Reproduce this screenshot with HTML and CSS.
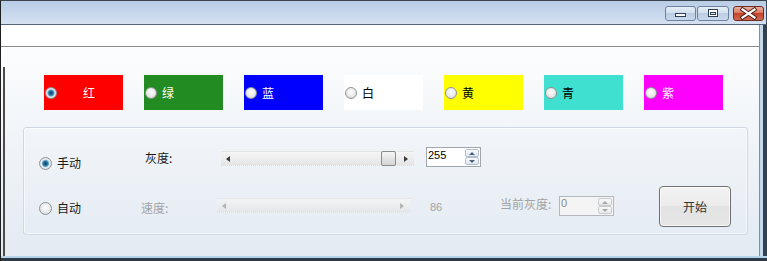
FILE: index.html
```html
<!DOCTYPE html>
<html>
<head>
<meta charset="utf-8">
<link rel="stylesheet" href="styles.css">
</head>
<body>
<div class="window">
  <div class="titlebar">
    <div class="tb-btn tb-min">
      <svg width="29" height="13" viewBox="0 0 29 13"><rect x="9.5" y="6.5" width="10" height="3" fill="#fff" stroke="#2f3f52"/></svg>
    </div>
    <div class="tb-btn tb-max">
      <svg width="30" height="13" viewBox="0 0 30 13"><rect x="10.5" y="2.5" width="9" height="7" fill="#fff" stroke="#2f3f52"/><rect x="12.5" y="5.5" width="5" height="2" fill="#dfe8f3" stroke="#2f3f52"/></svg>
    </div>
    <div class="tb-btn tb-close">
      <svg width="29" height="13" viewBox="0 0 29 13"><path d="M8.5 2.5 L20.5 10.5 M20.5 2.5 L8.5 10.5" stroke="#4a1a14" stroke-width="4" stroke-linecap="square"/><path d="M8.5 2.5 L20.5 10.5 M20.5 2.5 L8.5 10.5" stroke="#fff" stroke-width="2.2" stroke-linecap="square"/></svg>
    </div>
  </div>
  <div class="frame-body">
    <div class="inner">
      <div class="strip"></div>
      <div class="client">
        <div class="leftline"></div>
        <div class="content">
          <div class="swatches">
            <div class="swatch sw-red"><span class="radio radio-on"></span><span class="sw-text">红</span></div>
            <div class="swatch sw-green"><span class="radio"></span><span class="sw-text">绿</span></div>
            <div class="swatch sw-blue"><span class="radio"></span><span class="sw-text">蓝</span></div>
            <div class="swatch sw-white"><span class="radio"></span><span class="sw-text">白</span></div>
            <div class="swatch sw-yellow"><span class="radio"></span><span class="sw-text">黄</span></div>
            <div class="swatch sw-cyan"><span class="radio"></span><span class="sw-text">青</span></div>
            <div class="swatch sw-magenta"><span class="radio"></span><span class="sw-text">紫</span></div>
          </div>
          <div class="group">
            <div class="row row1">
              <div class="opt opt1"><span class="radio radio-on"></span><span class="opt-text">手动</span></div>
              <div class="lbl lbl-gray1">灰度:</div>
              <div class="slider slider1">
                <span class="arr arr-left"></span>
                <span class="track-space"></span>
                <span class="thumb"></span>
                <span class="arr arr-right"></span>
              </div>
              <div class="num num1">
                <span class="num-val">255</span>
                <span class="spin"><span class="sb"><span class="sa sa-up"></span></span><span class="sb"><span class="sa sa-down"></span></span></span>
              </div>
            </div>
            <div class="row row2">
              <div class="opt opt2"><span class="radio"></span><span class="opt-text">自动</span></div>
              <div class="lbl lbl-speed dim">速度:</div>
              <div class="slider slider2">
                <span class="arr arr-left"></span>
                <span class="track-space"></span>
                <span class="arr arr-right"></span>
              </div>
              <div class="val86 dim">86</div>
              <div class="lbl lbl-cur dim">当前灰度:</div>
              <div class="num num2">
                <span class="num-val">0</span>
                <span class="spin"><span class="sb"><span class="sa sa-up"></span></span><span class="sb"><span class="sa sa-down"></span></span></span>
              </div>
              <div class="btn-start">开始</div>
            </div>
          </div>
        </div>
      </div>
    </div>
    <div class="rightframe"></div>
  </div>
  <div class="bottomframe"></div>
</div>
</body>
</html>
```

FILE: styles.css
```css
html, body {
  margin: 0;
  padding: 0;
}
body {
  width: 767px;
  height: 261px;
  overflow: hidden;
  font-family: "Noto Sans CJK SC", "Noto Sans", sans-serif;
  font-size: 12px;
  color: #1a1a1a;
}
.window {
  width: 767px;
  height: 261px;
  box-sizing: border-box;
  border-left: 1px solid #1e1e1e;
  border-top: 1px solid #3a4450;
  display: flex;
  flex-direction: column;
}
.titlebar {
  height: 23px;
  flex: none;
  border-bottom: 1px solid #56657a;
  border-right: 1px solid #3a4a5a;
  background: linear-gradient(#b8cce5, #c9d9ed 60%, #d4e1f1);
  display: flex;
  justify-content: flex-end;
  align-items: flex-start;
  padding-right: 2px;
}
.tb-btn {
  margin-top: 5px;
  height: 15px;
  box-sizing: border-box;
  border-radius: 3px;
  display: flex;
  align-items: center;
  justify-content: center;
}
.tb-btn svg { display: block; }
.tb-min, .tb-max {
  border: 1px solid #6e82a0;
  background: linear-gradient(#e5edf7, #d2deee 50%, #bccde4 50%, #c9d9ec);
}
.tb-min { width: 31px; }
.tb-max { width: 32px; margin-left: 1px; }
.tb-close {
  width: 31px;
  margin-left: 4px;
  border: 1px solid #6b2c23;
  background: linear-gradient(#eab0a2, #d8735b 50%, #c4432b 50%, #d06a52);
}
.frame-body {
  display: flex;
  height: 231px;
  flex: none;
}
.inner {
  flex: 1;
  border-right: 1px solid #8d8d8d;
  display: flex;
  flex-direction: column;
}
.strip {
  height: 21px;
  flex: none;
  background: #fff;
  border-bottom: 1px solid #8a8a8a;
}
.client {
  flex: 1;
  display: flex;
  background: linear-gradient(#fcfdfe, #f4f7fa 30%, #e3eaf2);
}
.leftline {
  width: 2px;
  margin-left: 2px;
  margin-top: 20px;
  background: #4b4b4b;
}
.content {
  flex: 1;
}
.rightframe {
  width: 7px;
  background: linear-gradient(to right, #c3d9ee 0 3px, #33414f 3px 7px);
}
.bottomframe {
  height: 5px;
  flex: none;
  background: linear-gradient(#b6d3ec 0 2px, #2c3946 2px 5px);
}

/* radios */
.radio {
  display: inline-block;
  flex: none;
  width: 13px;
  height: 13px;
  box-sizing: border-box;
  border-radius: 50%;
  border: 1px solid #8f9399;
  background: radial-gradient(circle at 50% 40%, #fdfdfd 0, #e9e9e9 55%, #cdcdcd 100%);
}
.radio-on {
  background: radial-gradient(circle at 50% 50%, #0b425f 0, #22709d 2px, #5f9fc4 3px, #dbe6ee 4px, #ececec 100%);
}

/* swatches */
.swatches {
  display: flex;
  gap: 21px;
  margin-top: 28px;
  padding-left: 39px;
}
.swatch {
  width: 79px;
  height: 35px;
  box-sizing: border-box;
  padding-left: 1px;
  display: flex;
  align-items: center;
}
.swatch .radio {
  width: 12px;
  height: 12px;
  margin-top: 1px;
}
.sw-text {
  margin-left: 5px;
  line-height: 14px;
}
.sw-red { background: #ff0000; color: #fff; }
.sw-red .sw-text { margin-left: 26px; }
.sw-green { background: #228b22; color: #fff; }
.sw-blue { background: #0000ff; color: #fff; }
.sw-white { background: #ffffff; color: #000; }
.sw-yellow { background: #ffff00; color: #000; }
.sw-cyan { background: #40e0d0; color: #000; }
.sw-magenta { background: #ff00ff; color: #fff; }

/* group */
.group {
  margin: 17px 0 0 18px;
  width: 725px;
  height: 108px;
  box-sizing: border-box;
  border: 1px solid #d0d9e2;
  border-radius: 3px;
  box-shadow: inset 0 0 0 1px rgba(255,255,255,0.6);
  padding: 17px 0 0 15px;
}
.row {
  display: flex;
  align-items: flex-start;
}
.row1 { height: 25px; }
.row2 { height: 42px; margin-top: 15px; }
.opt {
  width: 80px;
  display: flex;
  align-items: center;
  height: 14px;
}
.opt-text {
  margin-left: 5px;
  line-height: 14px;
}
.opt1 { margin-top: 11px; }
.opt2 { margin-top: 16px; }
.lbl {
  line-height: 14px;
  white-space: nowrap;
}
.dim { color: #a3a3a3; }
.lbl-gray1 { margin-left: 26px; width: 39px; margin-top: 6px; }
.lbl-speed { margin-left: 22px; width: 40px; margin-top: 16px; }
.lbl-cur { margin-left: 50px; width: 56px; margin-top: 12px; }

/* sliders */
.slider {
  width: 193px;
  height: 15px;
  box-sizing: border-box;
  display: flex;
  align-items: center;
  padding-left: 5px;
  padding-right: 6px;
  background: linear-gradient(#f5f5f5, #ececec 60%, #e4e4e4);
  border-top: 1px dotted #e2e2e2;
  border-bottom: 1px dotted #dadada;
}
.slider1 { margin-left: 37px; margin-top: 6px; }
.slider2 { margin-left: 36px; margin-top: 13px; opacity: 0.85; }
.track-space { flex: 1; }
.arr {
  width: 0;
  height: 0;
  border-top: 3.5px solid transparent;
  border-bottom: 3.5px solid transparent;
}
.arr-left { border-right: 4px solid #3c3c3c; }
.arr-right { border-left: 4px solid #3c3c3c; }
.slider2 .arr-left { border-right-color: #a9a9a9; }
.slider2 .arr-right { border-left-color: #a9a9a9; }
.thumb {
  width: 15px;
  height: 15px;
  box-sizing: border-box;
  margin-right: 8px;
  border: 1px solid #8b8b8b;
  border-radius: 2px;
  background: linear-gradient(#f6f6f6, #e4e4e4 50%, #d4d4d4);
}

/* numeric */
.num {
  width: 55px;
  height: 20px;
  box-sizing: border-box;
  border: 1px solid #a0a6ad;
  background: #fff;
  display: flex;
  align-items: flex-start;
}
.num1 { margin-left: 12px; margin-top: 2px; }
.num2 { margin-left: 3px; margin-top: 11px; background: #f4f4f4; border-color: #b4b8bc; }
.num-val {
  flex: 1;
  font-family: "Liberation Sans", Arial, sans-serif;
  font-size: 11px;
  line-height: 13px;
  padding-left: 1px;
  padding-top: 1px;
  color: #000;
}
.num2 .num-val { color: #8a8a8a; padding-top: 0; }
.spin {
  width: 14px;
  height: 16px;
  margin: 1px 1px 0 0;
  display: flex;
  flex-direction: column;
}
.sb {
  flex: 1;
  box-sizing: border-box;
  border: 1px solid #b3bfcc;
  border-radius: 2px;
  background: linear-gradient(#f7f9fc, #dfe6ee);
  display: flex;
  align-items: center;
  justify-content: center;
}
.sa {
  width: 0;
  height: 0;
  border-left: 3px solid transparent;
  border-right: 3px solid transparent;
}
.sa-up { border-bottom: 3px solid #4d6079; }
.sa-down { border-top: 3px solid #4d6079; }
.num2 .sb { border-color: #c8ccd0; background: linear-gradient(#f8f8f8, #e8e8e8); }
.num2 .sa-up { border-bottom-color: #a8a8a8; }
.num2 .sa-down { border-top-color: #a8a8a8; }

.val86 {
  margin-left: 20px;
  width: 20px;
  margin-top: 15px;
  font-family: "Liberation Sans", Arial, sans-serif;
  font-size: 11px;
  line-height: 14px;
}

.btn-start {
  margin-left: 45px;
  margin-top: 1px;
  width: 72px;
  height: 41px;
  box-sizing: border-box;
  border: 1px solid #707070;
  border-radius: 4px;
  background: linear-gradient(#f3f3f3, #ebebeb 50%, #e3e3e3 50%, #e6e6e6);
  box-shadow: inset 0 0 0 1px rgba(255,255,255,0.7);
  display: flex;
  align-items: center;
  justify-content: center;
  color: #333;
  line-height: 14px;
}
```
